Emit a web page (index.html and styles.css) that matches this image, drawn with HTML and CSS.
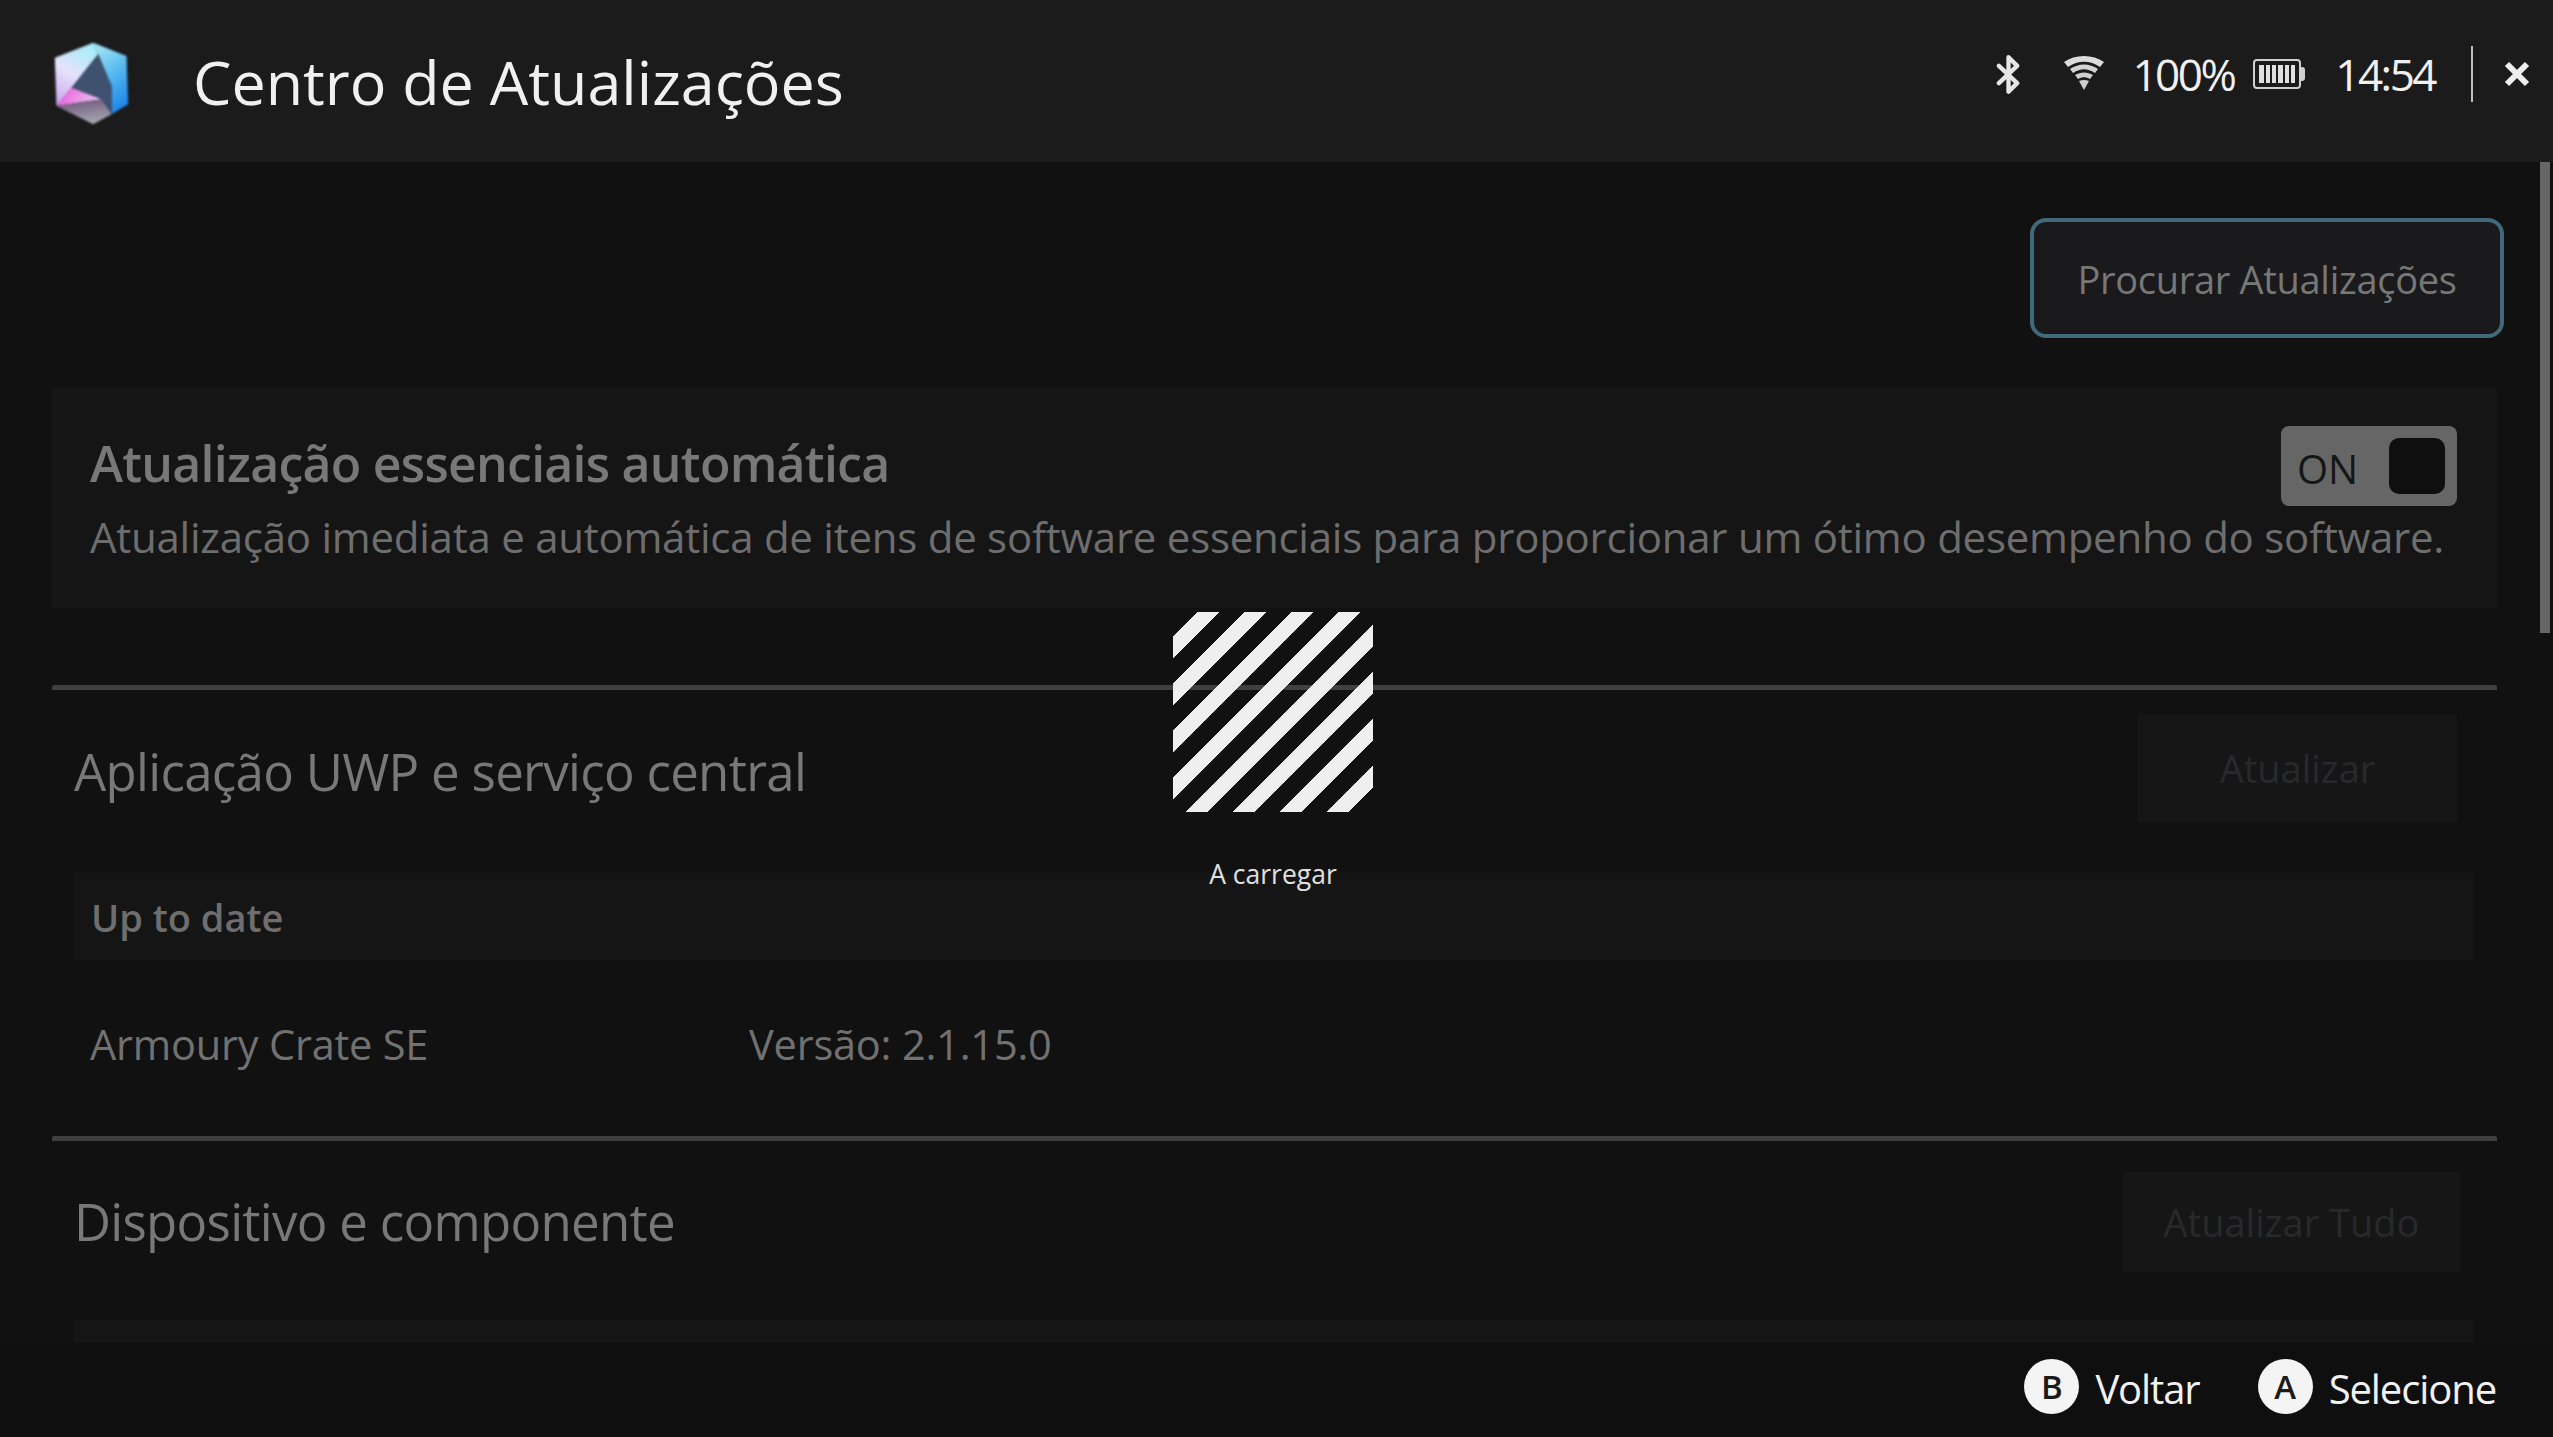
FILE: index.html
```html
<!DOCTYPE html>
<html lang="pt">
<head>
  <meta charset="UTF-8">
  <title>Centro de Atualizações</title>
  <link rel="stylesheet" href="styles.css">
</head>
<body>
  <div class="app">
    <header class="topbar">
      <div class="brand">
        <svg class="logo" viewBox="70 65 230 255" width="77" height="85">
          <defs>
            <linearGradient id="lgLeft" x1="0.6" y1="0" x2="0.2" y2="1">
              <stop offset="0" stop-color="#a8ecf8"/>
              <stop offset="0.5" stop-color="#e6e2fb"/>
              <stop offset="1" stop-color="#c9a8ee"/>
            </linearGradient>
            <linearGradient id="lgRight" x1="0.2" y1="0" x2="0.6" y2="1">
              <stop offset="0" stop-color="#a5e6f6"/>
              <stop offset="0.55" stop-color="#4fb4ee"/>
              <stop offset="1" stop-color="#1f86ea"/>
            </linearGradient>
            <linearGradient id="lgPink" x1="0" y1="0" x2="1" y2="0.2">
              <stop offset="0" stop-color="#f050dc"/>
              <stop offset="1" stop-color="#e6c4ee"/>
            </linearGradient>
            <linearGradient id="lgBase" x1="0" y1="0" x2="0.3" y2="1">
              <stop offset="0" stop-color="#6a4f78"/>
              <stop offset="1" stop-color="#a3a3ad"/>
            </linearGradient>
          </defs>
          <polygon points="190,70 75,115 80,260 125,205 205,105" fill="url(#lgLeft)"/>
          <polygon points="190,70 290,110 295,255 245,285 245,200 205,105" fill="url(#lgRight)"/>
          <polygon points="205,105 125,205 215,240 245,285 245,200" fill="#3e5270"/>
          <polygon points="80,260 125,205 215,240" fill="url(#lgPink)"/>
          <polygon points="80,260 215,240 245,285 190,315" fill="url(#lgBase)"/>
        </svg>
        <h1 class="title">Centro de Atualizações</h1>
      </div>
      <div class="status">
        <svg class="ic-bt" viewBox="0 0 26 42" width="25" height="41">
          <path d="M3 12 L22 30 L13 39 V3 L22 12 L3 30" fill="none" stroke="#e6e6e6" stroke-width="4.5" stroke-linecap="round" stroke-linejoin="round"/>
        </svg>
        <svg class="ic-wifi" viewBox="0 0 42 34" width="42" height="34">
          <path d="M1 6 C12 -2 30 -2 41 6 L37 11 C27 4 15 4 5 11 Z" fill="#dcdcdc"/>
          <path d="M7 13 C16 7 26 7 35 13 L32 17 C24 12 18 12 10 17 Z" fill="#d4d4d4"/>
          <path d="M12 19 C18 15.5 24 15.5 30 19 L27 23 C23 20.5 19 20.5 15 23 Z" fill="#cfcfcf"/>
          <path d="M16 25 C19 23.5 23 23.5 26 25 L21 34 Z" fill="#cfcfcf"/>
        </svg>
        <span class="pct">100%</span>
        <div class="battery">
          <div class="cells"><i></i><i></i><i></i><i></i><i></i><i></i></div>
        </div>
        <span class="clock">14:54</span>
        <span class="vline"></span>
        <svg class="ic-close" viewBox="0 0 30 30" width="30" height="30">
          <path d="M5 5 L25 25 M25 5 L5 25" stroke="#eeeeee" stroke-width="6" fill="none"/>
        </svg>
      </div>
    </header>

    <main class="content">
      <div class="actions">
        <button class="btn-check">Procurar Atualizações</button>
      </div>

      <section class="auto-card">
        <div class="auto-text">
          <h2>Atualização essenciais automática</h2>
          <p>Atualização imediata e automática de itens de software essenciais para proporcionar um ótimo desempenho do software.</p>
        </div>
        <div class="toggle"><span>ON</span><b></b></div>
      </section>

      <section class="group first">
        <div class="group-head">
          <h3>Aplicação UWP e serviço central</h3>
          <button class="btn-off btn-one">Atualizar</button>
        </div>
        <div class="state-row">Up to date</div>
        <div class="item-row">
          <span class="item-name">Armoury Crate SE</span>
          <span>Versão: 2.1.15.0</span>
        </div>
      </section>

      <section class="group second">
        <div class="group-head">
          <h3>Dispositivo e componente</h3>
          <button class="btn-off btn-all">Atualizar Tudo</button>
        </div>
        <div class="state-row cut"></div>
      </section>

      <div class="scroll-thumb"></div>

      <div class="loading">
        <div class="spinner"></div>
        <span>A carregar</span>
      </div>
    </main>

    <footer class="bottombar">
      <div class="hint"><span class="key">B</span>Voltar</div>
      <div class="hint"><span class="key">A</span>Selecione</div>
    </footer>
  </div>
</body>
</html>
```

FILE: styles.css
```css
* {
  box-sizing: border-box;
}

html, body {
  margin: 0;
  height: 100%;
  overflow: hidden;
}

body {
  font-family: 'Open Sans', 'Noto Sans', sans-serif;
  background-color: #111112;
  color: #fff;
}

.app {
  display: flex;
  flex-direction: column;
  height: 1437px;
}

.topbar {
  height: 162px;
  flex: none;
  background-color: #1b1b1c;
  display: flex;
  align-items: center;
  justify-content: space-between;
  padding: 0 21px 0 53px;
}

.brand {
  display: flex;
  align-items: center;
  gap: 63px;
}

.logo {
  margin-top: 4px;
  filter: blur(1px);
}

.title {
  margin: 0;
  font-size: 61px;
  font-weight: 400;
  color: #f0f0f0;
}

.status {
  display: flex;
  align-items: center;
  margin-bottom: 14px;
  color: #f0f0f0;
  font-size: 44px;
  letter-spacing: -2.5px;
}

.ic-bt {
  margin-right: 42px;
}

.ic-wifi {
  margin: 0 27px 2px 0;
}

.battery {
  width: 48px;
  height: 30px;
  margin: 0 34px 0 19px;
  border: 2px solid #d0d0d0;
  border-radius: 4px;
  padding: 4px 4px;
  position: relative;
}

.battery::after {
  content: "";
  position: absolute;
  right: -6px;
  top: 6px;
  width: 4px;
  height: 14px;
  background-color: #d0d0d0;
  border-radius: 0 3px 3px 0;
}

.cells {
  display: flex;
  gap: 2px;
  height: 100%;
}

.cells i {
  flex: 1;
  background-color: #e0e0e0;
}

.vline {
  width: 2px;
  height: 56px;
  background-color: #c0c0c0;
  margin: 0 29px 0 36px;
}

.content {
  flex: 1;
  position: relative;
  padding: 56px 56px 0 52px;
  overflow: hidden;
}

.actions {
  display: flex;
  justify-content: flex-end;
  margin-right: -7px;
}

.btn-check {
  width: 474px;
  height: 120px;
  padding-top: 2px;
  background-color: #1a1a1c;
  border: 4px solid #42697a;
  border-radius: 16px;
  color: #777;
  font-family: inherit;
  font-size: 38px;
  letter-spacing: -0.3px;
}

.auto-card {
  height: 220px;
  margin-top: 50px;
  background-color: #151516;
  display: flex;
  justify-content: space-between;
  padding: 43px 40px 0 38px;
}

.auto-text {
  flex: 1;
  min-width: 0;
}

.auto-text h2 {
  margin: 0;
  font-size: 50px;
  font-weight: 600;
  color: #787878;
  letter-spacing: -0.75px;
  line-height: 64px;
}

.auto-text p {
  margin: 14px 0 0;
  font-size: 42px;
  color: #6e6e6e;
  letter-spacing: -0.25px;
  line-height: 56px;
  white-space: nowrap;
}

.toggle {
  flex: none;
  width: 176px;
  height: 80px;
  margin-top: -5px;
  background-color: #666;
  border-radius: 8px;
  display: flex;
  align-items: center;
  justify-content: space-between;
  padding: 0 12px 0 16px;
  color: #161616;
  font-size: 40px;
}

.toggle span {
  margin-top: 4px;
}

.toggle b {
  width: 56px;
  height: 56px;
  background-color: #0f0f10;
  border-radius: 10px;
}

.group {
  border-top: 5px solid #404040;
  border-radius: 2px;
  padding: 0 24px 0 22px;
}

.group.first {
  margin-top: 77px;
}

.group-head {
  height: 156px;
  display: flex;
  align-items: center;
  justify-content: space-between;
}

.second .group-head {
  height: 162px;
}

.group-head h3 {
  margin: 0;
  font-size: 51px;
  font-weight: 400;
  color: #787878;
  letter-spacing: -0.7px;
}

.first .group-head h3 {
  margin-top: 6px;
}

.second .group-head h3 {
  margin-bottom: 2px;
}

.btn-off {
  background-color: #161617;
  border: none;
  color: #29292b;
  font-family: inherit;
  font-size: 38px;
}

.btn-one {
  width: 319px;
  height: 107px;
  margin-right: 16px;
}

.btn-all {
  width: 337px;
  height: 100px;
  margin-right: 13px;
}

.state-row {
  height: 87px;
  background-color: #151516;
  margin-top: 27px;
  padding-left: 17px;
  display: flex;
  align-items: center;
  font-size: 38px;
  font-weight: 600;
  color: #6e6e6e;
}

.state-row.cut {
  height: 40px;
  margin-top: 17px;
}

.item-row {
  display: flex;
  align-items: center;
  height: 170px;
  margin-bottom: 6px;
  padding: 0 0 2px 16px;
  font-size: 41.5px;
  color: #717171;
  letter-spacing: -0.2px;
}

.item-name {
  width: 659px;
}

.scroll-thumb {
  position: absolute;
  top: 0;
  right: 3px;
  width: 10px;
  height: 471px;
  background-color: #666;
}

.loading {
  position: absolute;
  left: 1173px;
  top: 450px;
  width: 200px;
  display: flex;
  flex-direction: column;
  align-items: center;
}

.spinner {
  width: 200px;
  height: 200px;
  background-image: repeating-linear-gradient(135deg, transparent 0, transparent 17.5px, #efefef 17.5px, #efefef 33.2px);
}

.loading span {
  margin-top: 44px;
  font-size: 26.5px;
  color: #e0e0e0;
  white-space: nowrap;
}

.bottombar {
  height: 94px;
  flex: none;
  background-color: #0f0f10;
  display: flex;
  justify-content: flex-end;
  align-items: center;
  gap: 58px;
  padding: 0 57px 3px 0;
}

.hint {
  display: flex;
  align-items: center;
  font-size: 40px;
  color: #f2f2f2;
  letter-spacing: -1.1px;
}

.key {
  width: 55px;
  height: 55px;
  margin: 0 16px 4px 0;
  border-radius: 50%;
  background-color: #f4f4f4;
  color: #1a1a1a;
  font-size: 33px;
  font-weight: 600;
  letter-spacing: 0;
  display: flex;
  align-items: center;
  justify-content: center;
}
```
